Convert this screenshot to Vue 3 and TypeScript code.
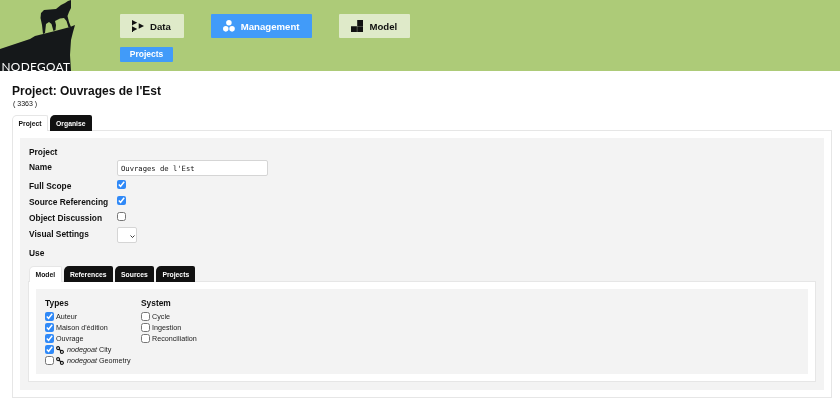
<script setup lang="ts">
const navItems = [
  { label: 'Data', icon: 'data', active: false },
  { label: 'Management', icon: 'management', active: true },
  { label: 'Model', icon: 'model', active: false },
]
const settings = [
  { label: 'Full Scope', checked: true },
  { label: 'Source Referencing', checked: true },
  { label: 'Object Discussion', checked: false },
]
const types = [
  { label: 'Auteur', checked: true },
  { label: "Maison d'édition", checked: true },
  { label: 'Ouvrage', checked: true },
  { label: 'City', checked: true, linked: true },
  { label: 'Geometry', checked: false, linked: true },
]
const system = ['Cycle', 'Ingestion', 'Reconciliation']
const useTabs = ['References', 'Sources', 'Projects']
</script>

<template>
  <div class="page">
    <header class="head">
      <div class="logo">
        <svg class="logo-art" width="76" height="71" viewBox="0 0 76 71">
          <path fill="#15181a" d="M0 49L30 39L35 36L43 34L55 31L70 27L75 25L73 32L71 40L70 55L71 71L0 71Z" />
          <path fill="#15181a" d="M71 0L71 8L69 12L67.5 16L69 22L71 27L68.5 27.5L66.5 21L64 18L60 18.5L55 21L56 25L55.5 30L53.5 31L51.5 24L49 22L46 24L45 33L43 34L42 25L40.5 18L41 13L44 10L50 9.5L56 9L61 5L65 3L68 1Z" />
        </svg>
        <span class="logo-text">NODEGOAT</span>
      </div>
      <nav class="nav">
        <div class="nav-row">
          <a v-for="item in navItems" :key="item.label" class="nav-btn" :class="{ active: item.active }">
            <svg v-if="item.icon === 'data'" width="12" height="12" viewBox="0 0 12 12">
              <path fill="currentColor" d="M0 0L5.3 2.7L1 4.8L1 5.3L0 5.3ZM0 6.3L5.3 9L1 11.2L1 12L0 12ZM6.7 3.3L12 6L6.7 8.7Z" />
            </svg>
            <svg v-else-if="item.icon === 'management'" width="12" height="12" viewBox="0 0 13 13">
              <circle cx="6.4" cy="3" r="3" fill="currentColor" />
              <circle cx="3" cy="9.6" r="3" fill="currentColor" />
              <circle cx="9.8" cy="9.6" r="3" fill="currentColor" />
            </svg>
            <svg v-else width="12" height="12" viewBox="0 0 12 12">
              <path fill="currentColor" d="M0 6.2H5.9V12H0ZM6.2 6.2H12V12H6.2ZM6.2 0H12V5.9H6.2Z" />
            </svg>
            <span>{{ item.label }}</span>
          </a>
        </div>
        <a class="sub-btn">Projects</a>
      </nav>
    </header>

    <main class="main">
      <h1 class="title">Project: Ouvrages de l'Est</h1>
      <p class="id">( 3363 )</p>

      <div class="tabs">
        <span class="tab current">Project</span>
        <span class="tab">Organise</span>
      </div>
      <section class="box">
        <div class="panel">
          <h2 class="heading">Project</h2>
          <div class="form">
            <label class="lbl name-lbl">Name</label>
            <input class="text" type="text" value="Ouvrages de l'Est" />
            <template v-for="s in settings" :key="s.label">
              <label class="lbl">{{ s.label }}</label>
              <input class="check form-check" type="checkbox" :checked="s.checked" />
            </template>
            <label class="lbl name-lbl">Visual Settings</label>
            <select class="sel"><option></option></select>
          </div>
          <h2 class="heading use">Use</h2>

          <div class="tabs inner-tabs">
            <span class="tab current">Model</span>
            <span v-for="t in useTabs" :key="t" class="tab">{{ t }}</span>
          </div>
          <div class="box inner-box">
            <div class="lists">
              <div class="list types">
                <h3 class="list-title">Types</h3>
                <label v-for="t in types" :key="t.label" class="item">
                  <input class="check" type="checkbox" :checked="t.checked" />
                  <svg v-if="t.linked" class="link" width="8" height="8" viewBox="0 0 8 8">
                    <circle cx="2.1" cy="2.1" r="1.5" fill="none" stroke="#111" stroke-width="1.1" />
                    <circle cx="5.9" cy="5.9" r="1.5" fill="none" stroke="#111" stroke-width="1.1" />
                    <path d="M3 3L5 5" stroke="#111" stroke-width="1.1" />
                  </svg>
                  <span v-if="t.linked"><i>nodegoat</i> {{ t.label }}</span>
                  <span v-else>{{ t.label }}</span>
                </label>
              </div>
              <div class="list">
                <h3 class="list-title">System</h3>
                <label v-for="s in system" :key="s" class="item">
                  <input class="check" type="checkbox" />
                  <span>{{ s }}</span>
                </label>
              </div>
            </div>
          </div>
        </div>
      </section>
    </main>
  </div>
</template>

<style>
html, body { margin: 0; background: #fff; }
</style>

<style scoped>
.page {
  width: 840px;
  height: 400px;
  overflow: hidden;
  font-family: "Liberation Sans", Arial, sans-serif;
  color: #111;
  will-change: transform;
}
.head {
  height: 71px;
  background: #adcb78;
  display: flex;
}
.logo {
  width: 120px;
  height: 71px;
  position: relative;
  flex: none;
}
.logo-art { display: block; }
.logo-text {
  position: absolute;
  left: 1.5px;
  bottom: -3px;
  font-family: Lato, sans-serif;
  font-size: 11.8px;
  letter-spacing: 0.35px;
  line-height: 15px;
  color: #fff;
}
.nav { padding-top: 14px; }
.nav-row { display: flex; gap: 27px; }
.nav-btn {
  height: 24px;
  box-sizing: border-box;
  padding: 0 13px 0 12px;
  display: flex;
  align-items: center;
  gap: 6px;
  background: #dfeac9;
  border-radius: 1px;
  font-size: 9.6px;
  font-weight: 700;
  color: #111;
}
.nav-btn.active { background: #419bf9; color: #fff; }
.sub-btn {
  display: block;
  width: 53px;
  height: 15px;
  margin-top: 9px;
  background: #419bf9;
  color: #fff;
  font-size: 8.5px;
  font-weight: 700;
  line-height: 15px;
  text-align: center;
  border-radius: 1px;
}
.main { padding: 13px 8px 0 12px; }
.title {
  margin: 0;
  font-size: 12px;
  line-height: 15px;
  font-weight: 700;
}
.id {
  margin: 0 0 0 1px;
  font-size: 7px;
  line-height: 9px;
  color: #111;
}
.tabs {
  display: flex;
  gap: 2px;
  margin-top: 7px;
  margin-bottom: -1px;
  height: 16px;
  position: relative;
  z-index: 1;
}
.tab {
  box-sizing: border-box;
  height: 16px;
  padding: 0 6px;
  background: #111;
  color: #fff;
  font-size: 6.8px;
  font-weight: 700;
  line-height: 17px;
  border-radius: 5px 2px 0 0;
}
.tab.current {
  background: #fff;
  color: #111;
  border: 1px solid #e6e6e6;
  border-bottom: 0;
  line-height: 16px;
  padding: 0 5.5px;
}
.box {
  box-sizing: border-box;
  height: 268px;
  padding: 7px;
  background: #fff;
  border: 1px solid #e6e6e6;
}
.panel {
  height: 252px;
  box-sizing: border-box;
  padding: 9px 8px 0;
  background: #f3f3f3;
}
.heading {
  margin: 0 0 0 1px;
  font-size: 8.4px;
  line-height: 11px;
  font-weight: 700;
}
.form {
  display: grid;
  grid-template-columns: 88px 1fr;
  align-items: center;
  margin: 2px 0 0 1px;
  row-gap: 2px;
}
.lbl {
  font-size: 8.4px;
  font-weight: 700;
  line-height: 14px;
}
.name-lbl { align-self: start; }
.text {
  box-sizing: border-box;
  width: 151px;
  height: 16px;
  margin: 0 0 1px;
  padding: 0 3px;
  font-family: "DejaVu Sans Mono", monospace;
  font-size: 7.2px;
  color: #111;
  background: #fff;
  border: 1px solid #d5d5d5;
  border-radius: 2px;
  outline: none;
}
.check {
  width: 9px;
  height: 9px;
  margin: 0;
  display: block;
  accent-color: #3089f7;
}
.form-check { margin-bottom: 4px; }
.sel {
  box-sizing: border-box;
  width: 20px;
  height: 16px;
  margin: 0;
  appearance: none;
  background: #fff url("data:image/svg+xml,%3Csvg xmlns='http://www.w3.org/2000/svg' width='5' height='3'%3E%3Cpath d='M.5.5L2.5 2.5L4.5.5' fill='none' stroke='%23222' stroke-width='.9'/%3E%3C/svg%3E") no-repeat 12px 7px;
  border: 1px solid #d5d5d5;
  border-radius: 2px;
}
.use { margin-top: 5px; }
.inner-tabs { margin-top: 7px; margin-left: 1px; }
.inner-tabs .tab { padding: 0 6.25px; }
.inner-tabs .tab.current { padding: 0 5.5px; }
.inner-box { height: 101px; }
.lists {
  box-sizing: border-box;
  height: 85px;
  padding: 9px 9px 0;
  background: #f3f3f3;
  display: flex;
  gap: 9px;
}
.list { display: flex; flex-direction: column; }
.types { width: 87px; }
.list-title {
  margin: 0 0 2px;
  font-size: 8.4px;
  line-height: 11px;
  font-weight: 700;
}
.item {
  display: flex;
  align-items: center;
  height: 11px;
  font-size: 7.2px;
  color: #222;
  white-space: nowrap;
}
.item .check { margin-right: 2px; }
.link { margin-right: 3px; flex: none; }
</style>
